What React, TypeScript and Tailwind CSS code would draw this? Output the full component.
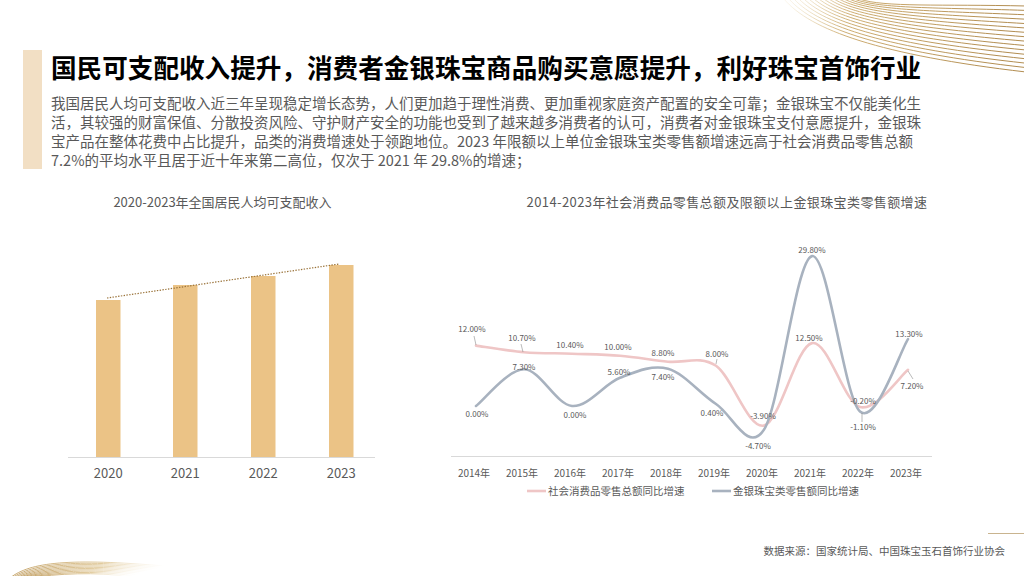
import React from "react";

const pink = [12, 10.7, 10.4, 10, 8.8, 8, -3.9, 12.5, -0.2, 7.2];
const grey = [0, 7.3, 0, 5.6, 7.4, 0.4, -4.7, 29.8, -1.1, 13.3];
const years = [2014, 2015, 2016, 2017, 2018, 2019, 2020, 2021, 2022, 2023];

const px = (i: number) => 476 + 48 * i;
const py = (v: number) => 407 - v * 5.03;

// catmull-rom -> bezier, like a smoothed office chart line
const smooth = (vals: number[]) => {
  const pts = vals.map((v, i) => [px(i), py(v)]);
  let d = `M${pts[0][0]},${pts[0][1]}`;
  for (let i = 0; i < pts.length - 1; i++) {
    const p0 = pts[i - 1] || pts[i];
    const p1 = pts[i];
    const p2 = pts[i + 1];
    const p3 = pts[i + 2] || p2;
    const c1 = [p1[0] + (p2[0] - p0[0]) / 6, p1[1] + (p2[1] - p0[1]) / 6];
    const c2 = [p2[0] - (p3[0] - p1[0]) / 6, p2[1] - (p3[1] - p1[1]) / 6];
    d += ` C${c1[0]},${c1[1]} ${c2[0]},${c2[1]} ${p2[0]},${p2[1]}`;
  }
  return d;
};

const pinkLabels: [string, number, number][] = [
  ["12.00%", 472, 333],
  ["10.70%", 522, 342],
  ["10.40%", 570, 349],
  ["10.00%", 618, 351],
  ["8.80%", 663, 357],
  ["8.00%", 717, 358],
  ["-3.90%", 763, 420],
  ["12.50%", 809, 342],
  ["-0.20%", 863, 405],
  ["7.20%", 912, 390],
];

const greyLabels: [string, number, number][] = [
  ["0.00%", 477, 418],
  ["7.30%", 524, 371],
  ["0.00%", 575, 419],
  ["5.60%", 619, 376],
  ["7.40%", 663, 381],
  ["0.40%", 712, 417],
  ["-4.70%", 758, 450],
  ["29.80%", 812, 254],
  ["-1.10%", 863, 431],
  ["13.30%", 909, 338],
];

const leaders: [number, number, number, number][] = [
  [476, 346, 474, 337],
  [523, 353, 521, 345],
  [716, 365, 717, 360],
  [908, 372, 913, 380],
  [862, 414, 862, 423],
];

const bars = [
  { year: "2020", x: 96, top: 301 },
  { year: "2021", x: 173, top: 286 },
  { year: "2022", x: 251, top: 277 },
  { year: "2023", x: 329, top: 266 },
];

const TopSwirl = () => (
  <svg className="absolute right-0 top-0" width="260" height="80" viewBox="764 0 260 80">
    <defs>
      <linearGradient id="gold1" x1="784" y1="0" x2="1000" y2="60" gradientUnits="userSpaceOnUse">
        <stop offset="0" stopColor="#f1e2bf" stopOpacity="0.3" />
        <stop offset="0.3" stopColor="#c9a564" />
        <stop offset="1" stopColor="#a9803d" />
      </linearGradient>
    </defs>
    {Array.from({ length: 16 }).map((_, i) => (
      <path
        key={i}
        d={`M${784 + i * 5},-1 C${810 + i * 5},${30 - i * 1.5} ${880 + i * 4},${55 - i * 3.4} ${1026},${72 - i * 4.4}`}
        fill="none"
        stroke="url(#gold1)"
        strokeWidth="0.9"
      />
    ))}
  </svg>
);

const BottomSwirl = () => (
  <svg className="absolute left-0 bottom-0" width="180" height="24" viewBox="0 552 180 24">
    <defs>
      <linearGradient id="gold2" x1="0" y1="0" x2="1" y2="0">
        <stop offset="0" stopColor="#b8904a" />
        <stop offset="0.6" stopColor="#d9bd84" />
        <stop offset="1" stopColor="#f3e6c8" stopOpacity="0" />
      </linearGradient>
    </defs>
    {Array.from({ length: 10 }).map((_, i) => (
      <path
        key={i}
        d={`M${10 + i * 2},578 C${30 + i * 3},${562 + i * 1.3} ${70 + i * 3},${558 + i * 1.5} ${165 - i * 4},${566 + i * 1.2}`}
        fill="none"
        stroke="url(#gold2)"
        strokeWidth="0.8"
      />
    ))}
  </svg>
);

const App = () => {
  return (
    <div className="w-[1024px] h-[576px] relative overflow-hidden bg-white flex flex-col font-['Noto_Sans_CJK_SC',sans-serif]">
      <TopSwirl />
      <BottomSwirl />
      <div className="absolute right-0 top-[533px] w-[36px] h-px bg-[#c9b48f]" />

      {/* Header */}
      <div className="flex pt-[50px] pl-[23px]">
        <div className="w-[19px] shrink-0 bg-[#f2dfc4]" />
        <div className="pl-[9px]">
          <h1 className="pt-[2px] text-[25.6px] leading-[30px] font-bold text-black whitespace-nowrap">
            国民可支配收入提升，消费者金银珠宝商品购买意愿提升，利好珠宝首饰行业
          </h1>
          <div className="mt-[11px] text-[14.5px] leading-[19px] text-[#595959] whitespace-nowrap">
            <p>我国居民人均可支配收入近三年呈现稳定增长态势，人们更加趋于理性消费、更加重视家庭资产配置的安全可靠；金银珠宝不仅能美化生</p>
            <p>活，其较强的财富保值、分散投资风险、守护财产安全的功能也受到了越来越多消费者的认可，消费者对金银珠宝支付意愿提升，金银珠</p>
            <p>宝产品在整体花费中占比提升，品类的消费增速处于领跑地位。2023 年限额以上单位金银珠宝类零售额增速远高于社会消费品零售总额</p>
            <p>7.2%的平均水平且居于近十年来第二高位，仅次于 2021 年 29.8%的增速；</p>
          </div>
        </div>
      </div>

      {/* Charts */}
      <div className="flex mt-[23px]">
        <div className="ml-[60px] w-[325px] flex flex-col">
          <div className="text-center text-[13px] leading-[20px] text-[#595959]">2020-2023年全国居民人均可支配收入</div>
          <svg width="325" height="270" viewBox="60 213 325 270">
            <line x1="68" y1="458.5" x2="375" y2="458.5" stroke="#d9d9d9" strokeWidth="1" />
            {bars.map((b) => (
              <g key={b.year}>
                <rect x={b.x} y={b.top} width="24.5" height={458 - b.top} fill="#ebc386" />
                <text x={b.x + 12.25} y="478.5" textAnchor="middle" fontSize="13" fill="#595959">
                  {b.year}
                </text>
              </g>
            ))}
            <line x1="107" y1="299" x2="339" y2="265" stroke="#9a733a" strokeWidth="1.2" strokeDasharray="1.4 1.4" />
          </svg>
        </div>

        <div className="ml-[55px] w-[574px] flex flex-col">
          <div className="text-center text-[13px] leading-[20px] text-[#595959] tracking-[0.4px]">
            2014-2023年社会消费品零售总额及限额以上金银珠宝类零售额增速
          </div>
          <svg width="574" height="290" viewBox="440 213 574 290">
            <line x1="451" y1="457.5" x2="932" y2="457.5" stroke="#d9d9d9" strokeWidth="1" />
            <path d={smooth(pink)} fill="none" stroke="#efc6c6" strokeWidth="2.6" strokeLinecap="round" />
            <path d={smooth(grey)} fill="none" stroke="#a8b2bf" strokeWidth="2.6" strokeLinecap="round" />
            {leaders.map((l, i) => (
              <line key={i} x1={l[0]} y1={l[1]} x2={l[2]} y2={l[3]} stroke="#8c8c8c" strokeWidth="0.6" />
            ))}
            {[...pinkLabels, ...greyLabels].map(([t, x, y], i) => (
              <text key={i} x={x} y={y} textAnchor="middle" fontSize="8" fill="#595959">
                {t}
              </text>
            ))}
            {years.map((y, i) => (
              <text key={y} x={px(i) - 2} y="477.5" textAnchor="middle" fontSize="10" fill="#595959">
                {y}年
              </text>
            ))}
            <line x1="527" y1="492" x2="546" y2="492" stroke="#efc6c6" strokeWidth="2.6" />
            <text x="548" y="495.8" fontSize="10.5" fill="#595959">社会消费品零售总额同比增速</text>
            <line x1="712" y1="492" x2="731" y2="492" stroke="#a8b2bf" strokeWidth="2.6" />
            <text x="733" y="495.8" fontSize="10.5" fill="#595959">金银珠宝类零售额同比增速</text>
          </svg>
        </div>
      </div>

      {/* Footer */}
      <div className="mt-auto pb-[17px] pr-[19px] text-right text-[10.5px] leading-[16px] text-[#595959]">
        数据来源：国家统计局、中国珠宝玉石首饰行业协会
      </div>
    </div>
  );
};

export default App;
